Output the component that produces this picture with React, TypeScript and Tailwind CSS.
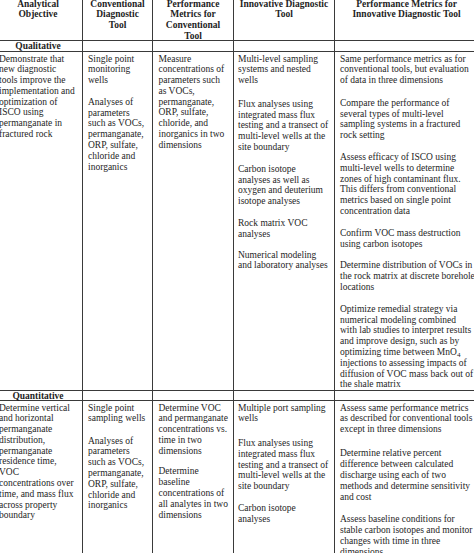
import React from 'react';

type Para = { lines: React.ReactNode[]; gap?: string };

const COLS = 'grid grid-cols-[89px_70px_81px_101px_144px]';

function Lines({ lines }: { lines: React.ReactNode[] }) {
  return (
    <>
      {lines.map((l, j) => (
        <div key={j} className="whitespace-nowrap leading-[10.8px]">
          {l}
        </div>
      ))}
    </>
  );
}

function BodyCell({ paras, pad = 'pl-[5px]' }: { paras: Para[]; pad?: string }) {
  return (
    <div className={`border-r border-[#3a3a3a] pt-[1.5px] ${pad}`}>
      {paras.map((p, i) => (
        <div key={i} className={i === 0 ? '' : p.gap ?? 'mt-[11px]'}>
          <Lines lines={p.lines} />
        </div>
      ))}
    </div>
  );
}

function HeadCell({ lines }: { lines: string[] }) {
  return (
    <div className="border-r border-[#3a3a3a] pt-[0.5px] text-center font-bold">
      <Lines lines={lines} />
    </div>
  );
}

function SectionRow({ label, height }: { label: string; height: string }) {
  return (
    <div className={`${COLS} ${height} border-b border-[#3a3a3a]`}>
      <div className="border-r border-[#3a3a3a] text-center font-bold leading-[10px]">{label}</div>
      <div className="border-r border-[#3a3a3a]" />
      <div className="border-r border-[#3a3a3a]" />
      <div className="border-r border-[#3a3a3a]" />
      <div className="border-r border-[#3a3a3a]" />
    </div>
  );
}

const qualitative: Para[][] = [
  [
    {
      lines: [
        'Demonstrate that',
        'new diagnostic',
        'tools improve the',
        'implementation and',
        'optimization of',
        'ISCO using',
        'permanganate in',
        'fractured rock',
      ],
    },
  ],
  [
    { lines: ['Single point', 'monitoring', 'wells'] },
    {
      lines: [
        'Analyses of',
        'parameters',
        'such as VOCs,',
        'permanganate,',
        'ORP, sulfate,',
        'chloride and',
        'inorganics',
      ],
    },
  ],
  [
    {
      lines: [
        'Measure',
        'concentrations of',
        'parameters such',
        'as VOCs,',
        'permanganate,',
        'ORP, sulfate,',
        'chloride, and',
        'inorganics in two',
        'dimensions',
      ],
    },
  ],
  [
    { lines: ['Multi-level sampling', 'systems and nested', 'wells'] },
    {
      gap: 'mt-[13px]',
      lines: [
        'Flux analyses using',
        'integrated mass flux',
        'testing and a transect of',
        'multi-level wells at the',
        'site boundary',
      ],
    },
    { lines: ['Carbon isotope', 'analyses as well as', 'oxygen and deuterium', 'isotope analyses'] },
    { lines: ['Rock matrix VOC', 'analyses'] },
    { gap: 'mt-[10px]', lines: ['Numerical modeling', 'and laboratory analyses'] },
  ],
  [
    {
      lines: [
        'Same performance metrics as for',
        'conventional tools, but evaluation',
        'of data in three dimensions',
      ],
    },
    {
      gap: 'mt-[12px]',
      lines: [
        'Compare the performance of',
        'several types of multi-level',
        'sampling systems in a fractured',
        'rock setting',
      ],
    },
    {
      lines: [
        'Assess efficacy of ISCO using',
        'multi-level wells to determine',
        'zones of high contaminant flux.',
        'This differs from conventional',
        'metrics based on single point',
        'concentration data',
      ],
    },
    { lines: ['Confirm VOC mass destruction', 'using carbon isotopes'] },
    {
      lines: [
        'Determine distribution of VOCs in',
        'the rock matrix at discrete borehole',
        'locations',
      ],
    },
    {
      lines: [
        'Optimize remedial strategy via',
        'numerical modeling combined',
        'with lab studies to interpret results',
        'and improve design, such as by',
        <>
          optimizing time between MnO<sub>4</sub>
        </>,
        'injections to assessing impacts of',
        'diffusion of VOC mass back out of',
        'the shale matrix',
      ],
    },
  ],
];

const quantitative: Para[][] = [
  [
    {
      lines: [
        'Determine vertical',
        'and horizontal',
        'permanganate',
        'distribution,',
        'permanganate',
        'residence time,',
        'VOC',
        'concentrations over',
        'time, and mass flux',
        'across property',
        'boundary',
      ],
    },
  ],
  [
    { lines: ['Single point', 'sampling wells'] },
    {
      gap: 'mt-[11.5px]',
      lines: [
        'Analyses of',
        'parameters',
        'such as VOCs,',
        'permanganate,',
        'ORP, sulfate,',
        'chloride and',
        'inorganics',
      ],
    },
  ],
  [
    {
      lines: ['Determine VOC', 'and permanganate', 'concentrations vs.', 'time in two', 'dimensions'],
    },
    {
      gap: 'mt-[10px]',
      lines: ['Determine', 'baseline', 'concentrations of', 'all analytes in two', 'dimensions'],
    },
  ],
  [
    { lines: ['Multiple port sampling', 'wells'] },
    {
      gap: 'mt-[14px]',
      lines: [
        'Flux analyses using',
        'integrated mass flux',
        'testing and a transect of',
        'multi-level wells at the',
        'site boundary',
      ],
    },
    { lines: ['Carbon isotope', 'analyses'] },
  ],
  [
    {
      lines: [
        'Assess same performance metrics',
        'as described for conventional tools',
        'except in three dimensions',
      ],
    },
    {
      gap: 'mt-[13.5px]',
      lines: [
        'Determine relative percent',
        'difference between calculated',
        'discharge using each of two',
        'methods and determine sensitivity',
        'and cost',
      ],
    },
    {
      gap: 'mt-[12px]',
      lines: [
        'Assess baseline conditions for',
        'stable carbon isotopes and monitor',
        'changes with time in three',
        'dimensions',
      ],
    },
  ],
];

function BodyRow({ cells, height }: { cells: Para[][]; height: string }) {
  return (
    <div className={`${COLS} ${height} border-b border-[#3a3a3a]`}>
      {cells.map((paras, i) => (
        <BodyCell key={i} paras={paras} pad={i === 3 ? 'pl-[4px]' : i === 2 ? 'pl-[5.5px]' : 'pl-[5px]'} />
      ))}
    </div>
  );
}

export default function App() {
  return (
    <div className="w-[474px] h-[553px] overflow-hidden bg-white text-[#1e1e1e] text-[9.5px] font-['Liberation_Serif','Times_New_Roman',serif]">
      <div className="-ml-[6px] -mt-[2px] w-[485px]">
        <div className={`${COLS} h-[43px] border-b border-[#3a3a3a]`}>
          <HeadCell lines={['Analytical', 'Objective']} />
          <HeadCell lines={['Conventional', 'Diagnostic', 'Tool']} />
          <HeadCell lines={['Performance', 'Metrics for', 'Conventional', 'Tool']} />
          <HeadCell lines={['Innovative Diagnostic', 'Tool']} />
          <HeadCell lines={['Performance Metrics for', 'Innovative Diagnostic Tool']} />
        </div>
        <SectionRow label="Qualitative" height="h-[11px]" />
        <BodyRow cells={qualitative} height="h-[339px]" />
        <SectionRow label="Quantitative" height="h-[10px]" />
        <BodyRow cells={quantitative} height="h-[170px]" />
      </div>
    </div>
  );
}
